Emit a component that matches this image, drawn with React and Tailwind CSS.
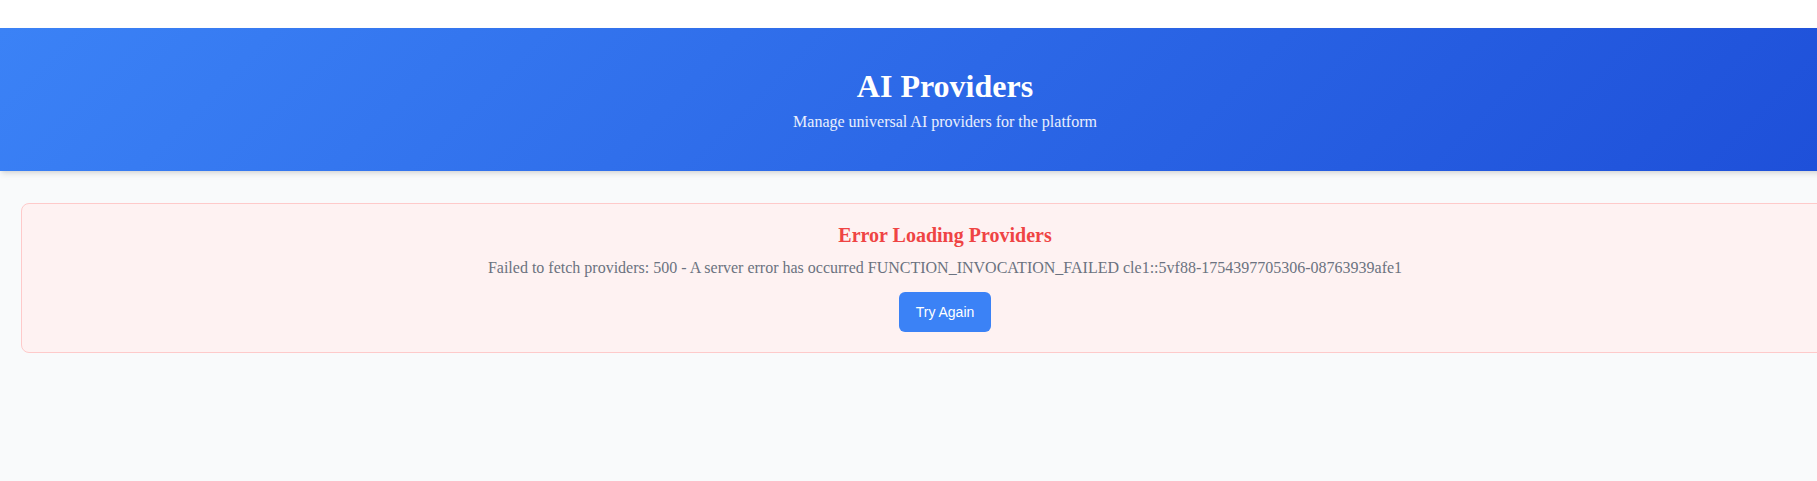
export default function App() {
  return (
    <div className="w-full min-h-[481px] overflow-hidden bg-[#f9fafb]" style={{ fontFamily: '"Liberation Serif", "Times New Roman", serif' }}>
      <div className="w-[1890px]">
        <div className="h-[28px] bg-white" />
        <header className="bg-[linear-gradient(135deg,#3b82f6_0%,#1d4ed8_100%)] pt-10 pb-10 text-center text-white shadow-md">
          <h1 className="mb-2 text-[32px] font-bold leading-[normal]">AI Providers</h1>
          <p className="text-[16px] leading-[normal] text-white/90">Manage universal AI providers for the platform</p>
        </header>
        <div className="mx-[21px] mt-8 rounded-lg border border-[#fecaca] bg-[#fef2f2] p-5 text-center">
          <h3 className="mb-3 text-[20px] font-bold leading-[normal] text-[#ef4444]">Error Loading Providers</h3>
          <p className="mb-4 text-[16px] leading-[normal] text-[#6b7280]">
            Failed to fetch providers: 500 - A server error has occurred FUNCTION_INVOCATION_FAILED cle1::5vf88-1754397705306-08763939afe1
          </p>
          <button
            className="mt-[-1px] h-10 rounded-md bg-[#3b82f6] px-[17px] text-[14px] text-white"
            style={{ fontFamily: '"Liberation Sans", Arial, sans-serif' }}
          >
            Try Again
          </button>
        </div>
      </div>
    </div>
  );
}
